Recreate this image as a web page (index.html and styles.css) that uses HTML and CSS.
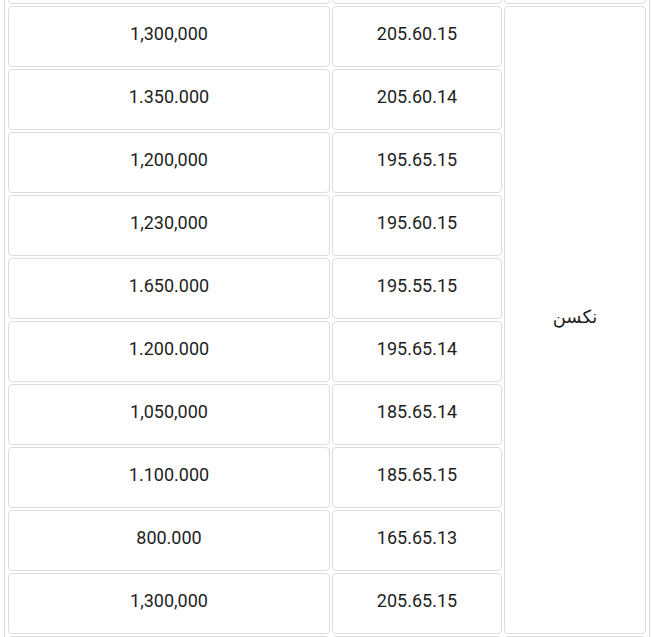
FILE: index.html
```html
<!DOCTYPE html>
<html lang="fa">
<head>
<meta charset="utf-8">
<title>قیمت لاستیک</title>
<link rel="stylesheet" href="styles.css">
</head>
<body>
<div class="frame">
<table class="price-table" dir="rtl">
<tbody>
<tr class="row">
<td class="cell model-col"></td>
<td class="cell size-col"></td>
<td class="cell price-col"></td>
</tr>
<tr class="row">
<td class="cell model" rowspan="10">نکسن</td>
<td class="cell">205.60.15</td>
<td class="cell">1,300,000</td>
</tr>
<tr class="row"><td class="cell">205.60.14</td><td class="cell">1.350.000</td></tr>
<tr class="row"><td class="cell">195.65.15</td><td class="cell">1,200,000</td></tr>
<tr class="row"><td class="cell">195.60.15</td><td class="cell">1,230,000</td></tr>
<tr class="row"><td class="cell">195.55.15</td><td class="cell">1.650.000</td></tr>
<tr class="row"><td class="cell">195.65.14</td><td class="cell">1.200.000</td></tr>
<tr class="row"><td class="cell">185.65.14</td><td class="cell">1,050,000</td></tr>
<tr class="row"><td class="cell">185.65.15</td><td class="cell">1.100.000</td></tr>
<tr class="row"><td class="cell">165.65.13</td><td class="cell">800.000</td></tr>
<tr class="row"><td class="cell">205.65.15</td><td class="cell">1,300,000</td></tr>
<tr class="row">
<td class="cell"></td>
<td class="cell"></td>
<td class="cell"></td>
</tr>
</tbody>
</table>
</div>
</body>
</html>
```
FILE: styles.css
```css
html, body {
  margin: 0;
  padding: 0;
  background: #ffffff;
  overflow: hidden;
}

body {
  height: 637px;
  font-family: Roboto, "DejaVu Sans", sans-serif;
  color: #1e1e1e;
}

.frame {
  margin-top: -60px;
  margin-left: 4px;
  width: 646px;
  border: 1px solid #dddddd;
  border-radius: 4px;
  padding: 0 1px;
  box-sizing: border-box;
}

.price-table {
  width: 642px;
  table-layout: fixed;
  border-collapse: separate;
  border-spacing: 2px;
}

.cell {
  box-sizing: border-box;
  height: 61px;
  padding: 12px 6px 18px;
  line-height: 29px;
  font-size: 18px;
  text-align: center;
  vertical-align: middle;
  border: 1px solid #dddddd;
  border-radius: 4px;
  background: #ffffff;
  white-space: nowrap;
}

.model-col { width: 142px; }
.size-col { width: 170px; }
.price-col { width: 322px; }

.model {
  padding: 0 6px 7px;
}
```
